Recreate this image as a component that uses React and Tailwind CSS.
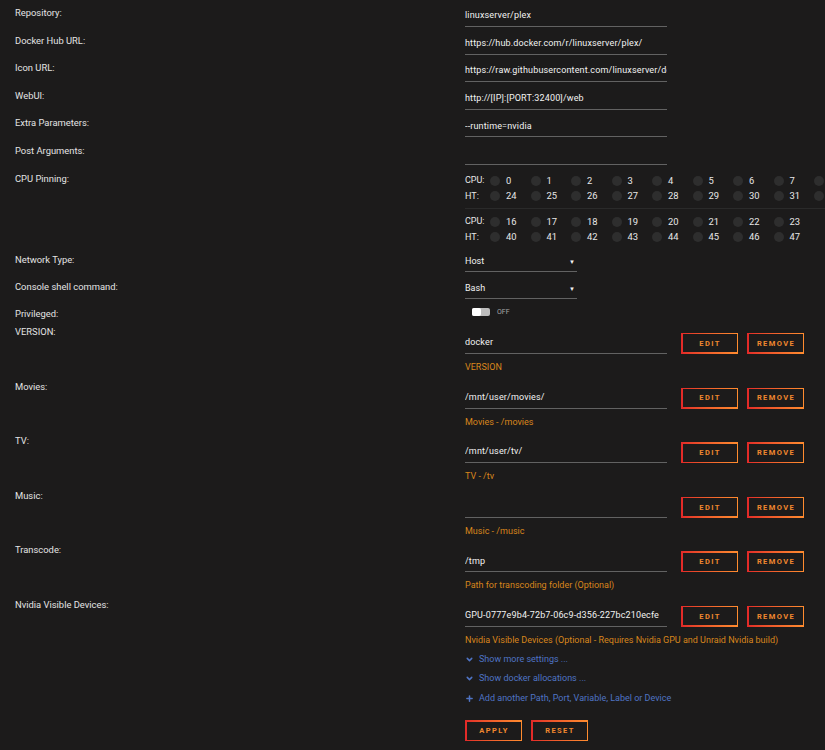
import { ChevronDown, Plus } from "lucide-react";

const font = { fontFamily: "Roboto, 'Liberation Sans', sans-serif" };

const topFields = [
  { label: "Repository:", value: "linuxserver/plex" },
  { label: "Docker Hub URL:", value: "https://hub.docker.com/r/linuxserver/plex/" },
  { label: "Icon URL:", value: "https://raw.githubusercontent.com/linuxserver/docker-templates/master/linuxserver.io/img/plex-icon.png" },
  { label: "WebUI:", value: "http://[IP]:[PORT:32400]/web" },
  { label: "Extra Parameters:", value: "--runtime=nvidia" },
  { label: "Post Arguments:", value: "" },
];

const configs = [
  { label: "VERSION:", value: "docker", desc: "VERSION" },
  { label: "Movies:", value: "/mnt/user/movies/", desc: "Movies - /movies" },
  { label: "TV:", value: "/mnt/user/tv/", desc: "TV - /tv" },
  { label: "Music:", value: "", desc: "Music - /music" },
  { label: "Transcode:", value: "/tmp", desc: "Path for transcoding folder (Optional)" },
  {
    label: "Nvidia Visible Devices:",
    value: "GPU-0777e9b4-72b7-06c9-d356-227bc210ecfe",
    desc: "Nvidia Visible Devices (Optional - Requires Nvidia GPU and Unraid Nvidia build)",
  },
];

const range = (a, b) => Array.from({ length: b - a + 1 }, (_, i) => a + i);

const Label = ({ children }) => (
  <div className="w-[450px] shrink-0 pt-[6px] text-[9.4px] leading-[13px] text-[#e4e4e4]">
    {children}
  </div>
);

const TextInput = ({ value }) => (
  <div className="w-[202px] h-[21px] border-b border-[#626262] flex items-center overflow-hidden whitespace-nowrap text-[9px] tracking-[0.15px] text-[#f2f2f2]">
    {value}
  </div>
);

const GradButton = ({ children }) => (
  <div className="w-[57px] h-[21px] p-[1.5px] bg-linear-to-r from-[#e22828] to-[#ff8c2f]">
    <div className="w-full h-full bg-[#1c1b1b] flex items-center justify-center pl-[1px] text-[7.5px] font-bold tracking-[1.4px] text-[#f0882f]">
      {children}
    </div>
  </div>
);

const CpuRow = ({ label, nums }) => (
  <div className="flex items-center h-[15.5px] text-[9px] text-[#e8e8e8] whitespace-nowrap">
    <span className="w-[25px] shrink-0">{label}</span>
    {nums.map((n) => (
      <div key={n} className="w-[40.5px] shrink-0 flex items-center gap-[6px]">
        <span className="w-[10px] h-[10px] rounded-full bg-[#2e2e2e]" />
        <span className="text-[9.4px]">{n}</span>
      </div>
    ))}
  </div>
);

const Select = ({ value }) => (
  <div className="w-[112px] h-[20px] border-b border-[#626262] flex items-center justify-between text-[9px] text-[#f2f2f2]">
    <span>{value}</span>
    <span className="text-[6px] pr-[2px]">▼</span>
  </div>
);

export default function App() {
  return (
    <div style={font} className="h-screen overflow-hidden bg-[#1c1b1b] pl-[15px]">
      {topFields.map((f) => (
        <div key={f.label} className="flex h-[27.6px]">
          <Label>{f.label}</Label>
          <div className="pt-[6px]">
            <TextInput value={f.value} />
          </div>
        </div>
      ))}

      {/* CPU pinning */}
      <div className="flex h-[81.4px]">
        <Label>CPU Pinning:</Label>
        <div className="pt-[7.5px] flex-1 min-w-0">
          <CpuRow label="CPU:" nums={range(0, 15)} />
          <CpuRow label="HT:" nums={range(24, 39)} />
          <div className="mt-[4px] mb-[5px] h-px bg-[#2a2a2a]" />
          <CpuRow label="CPU:" nums={range(16, 23)} />
          <CpuRow label="HT:" nums={range(40, 47)} />
        </div>
      </div>

      <div className="flex h-[27px]">
        <Label>Network Type:</Label>
        <div className="pt-[5px]">
          <Select value="Host" />
        </div>
      </div>
      <div className="flex h-[27px]">
        <Label>Console shell command:</Label>
        <div className="pt-[5px]">
          <Select value="Bash" />
        </div>
      </div>
      <div className="flex h-[18px]">
        <Label>Privileged:</Label>
        <div className="pt-[7px] pl-[7px] flex items-start gap-[7px]">
          <div className="w-[18px] h-[8px] rounded-[2px] bg-[#bdbdbd] flex">
            <div className="w-[9px] h-[8px] rounded-[2px] bg-white" />
          </div>
          <span className="text-[7px] leading-[8px] text-[#a8a8a8]">OFF</span>
        </div>
      </div>

      {configs.map((c) => (
        <div key={c.label} className="flex h-[54.6px]">
          <Label>{c.label}</Label>
          <div className="pt-[14px]">
            <div className="flex items-start">
              <TextInput value={c.value} />
              <div className="ml-[14px] flex gap-[9px]">
                <GradButton>EDIT</GradButton>
                <GradButton>REMOVE</GradButton>
              </div>
            </div>
            <div className="mt-[6px] text-[9px] leading-[14px] text-[#d8861c] whitespace-nowrap">
              {c.desc}
            </div>
          </div>
        </div>
      ))}

      <div className="pl-[450px] pt-[3px] text-[9px] text-[#4f74c4]">
        <div className="flex items-center gap-[5px] h-[19.5px]">
          <ChevronDown size={9} strokeWidth={4} />
          <span>Show more settings ...</span>
        </div>
        <div className="flex items-center gap-[5px] h-[19.5px]">
          <ChevronDown size={9} strokeWidth={4} />
          <span>Show docker allocations ...</span>
        </div>
        <div className="flex items-center gap-[5px] h-[19.5px]">
          <Plus size={9} strokeWidth={4} />
          <span>Add another Path, Port, Variable, Label or Device</span>
        </div>
        <div className="mt-[12px] flex gap-[9px]">
          <GradButton>APPLY</GradButton>
          <GradButton>RESET</GradButton>
        </div>
      </div>
    </div>
  );
}
